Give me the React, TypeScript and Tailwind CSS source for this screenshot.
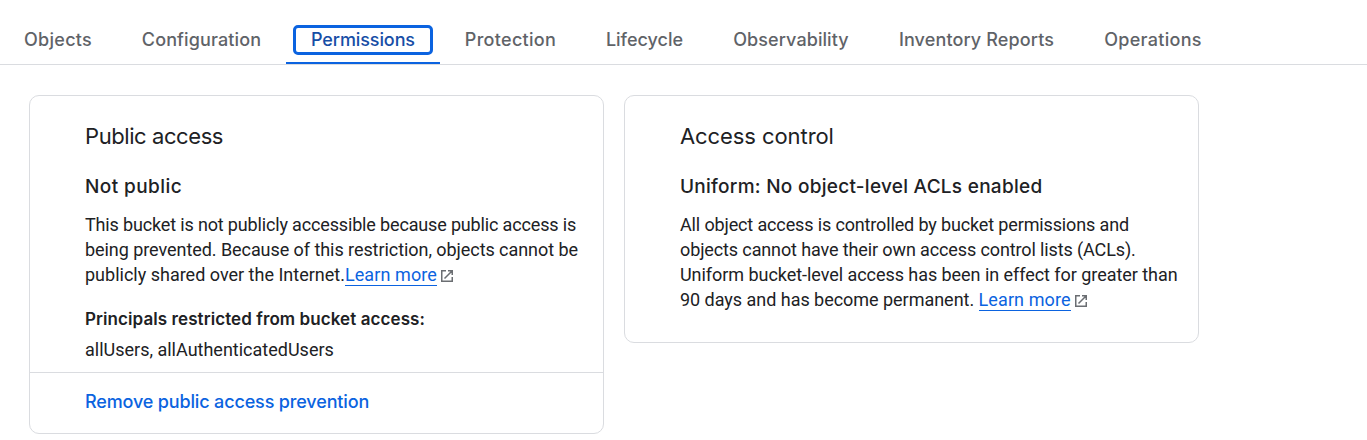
import type { ReactNode } from "react";

const tabs = [
  { label: "Objects", box: "w-[116px]", text: "tracking-[0.3px]" },
  { label: "Configuration", box: "w-[170px] pl-px", text: "tracking-[0.12px]" },
  { label: "Permissions", box: "w-[154px]", text: "tracking-[-0.1px]", active: true },
  { label: "Protection", box: "w-[141px]", text: "tracking-[0.3px]" },
  { label: "Lifecycle", box: "w-[127px]", text: "tracking-[0px]" },
  { label: "Observability", box: "w-[166px]", text: "tracking-[0.08px]" },
  { label: "Inventory Reports", box: "w-[205px]", text: "tracking-[0.13px]" },
  { label: "Operations", box: "w-[148px]", text: "tracking-[0.3px]" },
];

function ExternalIcon() {
  return (
    <svg viewBox="0 0 18 18" className="ml-px inline-block size-[18px] align-[-4px]" fill="none" stroke="#6b6e72" strokeWidth="1.5">
      <path d="M8 3.75H3.75v10.5h10.5V10M10 3.75h4.25V8M14 4L6.5 11.5" />
    </svg>
  );
}

function LearnMore() {
  return (
    <>
      <a href="#" className="inline-block h-[24px] border-b border-[#0b63e0] tracking-[0.1px] text-[#0b63e0]">Learn more</a>
      <ExternalIcon />
    </>
  );
}

function Card({ title, heading, titleText, headingText, className, children }: { title: string; heading: string; titleText: string; headingText: string; className: string; children: ReactNode }) {
  return (
    <section className={`w-[575px] rounded-[10px] border border-[#dadce0] ${className}`}>
      <div className="pl-[55px]">
        <h2 className={`pt-[25px] font-['Inter',sans-serif] text-[22px] leading-[30px] whitespace-nowrap ${titleText}`}>{title}</h2>
        <h3 className={`pt-[23px] font-['Inter',sans-serif] text-[19px] leading-[26px] font-medium whitespace-nowrap ${headingText}`}>{heading}</h3>
      </div>
      {children}
    </section>
  );
}

export default function App() {
  return (
    <main className="h-[440px] overflow-hidden bg-white font-['Roboto',sans-serif] text-[18px] leading-[25px] text-[#202124]">
      <nav className="flex h-[65px] border-b border-[#dadce0] pt-[15px] font-['Inter',sans-serif] font-medium">
        {tabs.map((t) => (
          <button
            key={t.label}
            className={`flex h-[49px] shrink-0 justify-center pt-[10px] leading-[30px] whitespace-nowrap ${t.box} ${t.active ? "border-b-2 border-[#0b63e0] text-[#174ea6]" : "text-[#5f6368]"}`}
          >
            <span className={t.active ? `flex h-[30px] w-[140px] items-center justify-center rounded-[5px] border-3 border-[#0b63e0] ${t.text}` : t.text}>{t.label}</span>
          </button>
        ))}
      </nav>
      <div className="flex items-start gap-5 pt-[30px] pl-[29px]">
        <Card title="Public access" heading="Not public" titleText="tracking-[-0.42px]" headingText="tracking-[0.42px]" className="h-[339px]">
          <div className="pt-[12px] pl-[55px]">
            <p className="whitespace-nowrap">
              <span className="tracking-[-0.155px]">This bucket is not publicly accessible because public access is</span><br />
              <span className="tracking-[-0.06px]">being prevented. Because of this restriction, objects cannot be</span><br />
              <span>publicly shared over the Internet.</span><LearnMore />
            </p>
            <h4 className="pt-[20px] font-['Inter',sans-serif] text-[17px] leading-[25px] font-semibold tracking-[0.08px]">Principals restricted from bucket access:</h4>
            <p className="pt-[5px]">allUsers, allAuthenticatedUsers</p>
          </div>
          <div className="mt-[10px] border-t border-[#dadce0] pt-[16px] pl-[55px]">
            <button className="font-['Inter',sans-serif] font-medium tracking-[-0.15px] text-[#0b63e0]">Remove public access prevention</button>
          </div>
        </Card>
        <Card title="Access control" heading="Uniform: No object-level ACLs enabled" titleText="tracking-[-0.08px]" headingText="tracking-[0.27px]" className="h-[248px]">
          <p className="pt-[12px] pl-[55px] whitespace-nowrap">
            <span className="tracking-[-0.14px]">All object access is controlled by bucket permissions and</span><br />
            <span className="tracking-[-0.12px]">objects cannot have their own access control lists (ACLs).</span><br />
            <span className="tracking-[-0.05px]">Uniform bucket-level access has been in effect for greater than</span><br />
            <span className="tracking-[-0.03px]">90 days and has become permanent. </span><LearnMore />
          </p>
        </Card>
      </div>
    </main>
  );
}
